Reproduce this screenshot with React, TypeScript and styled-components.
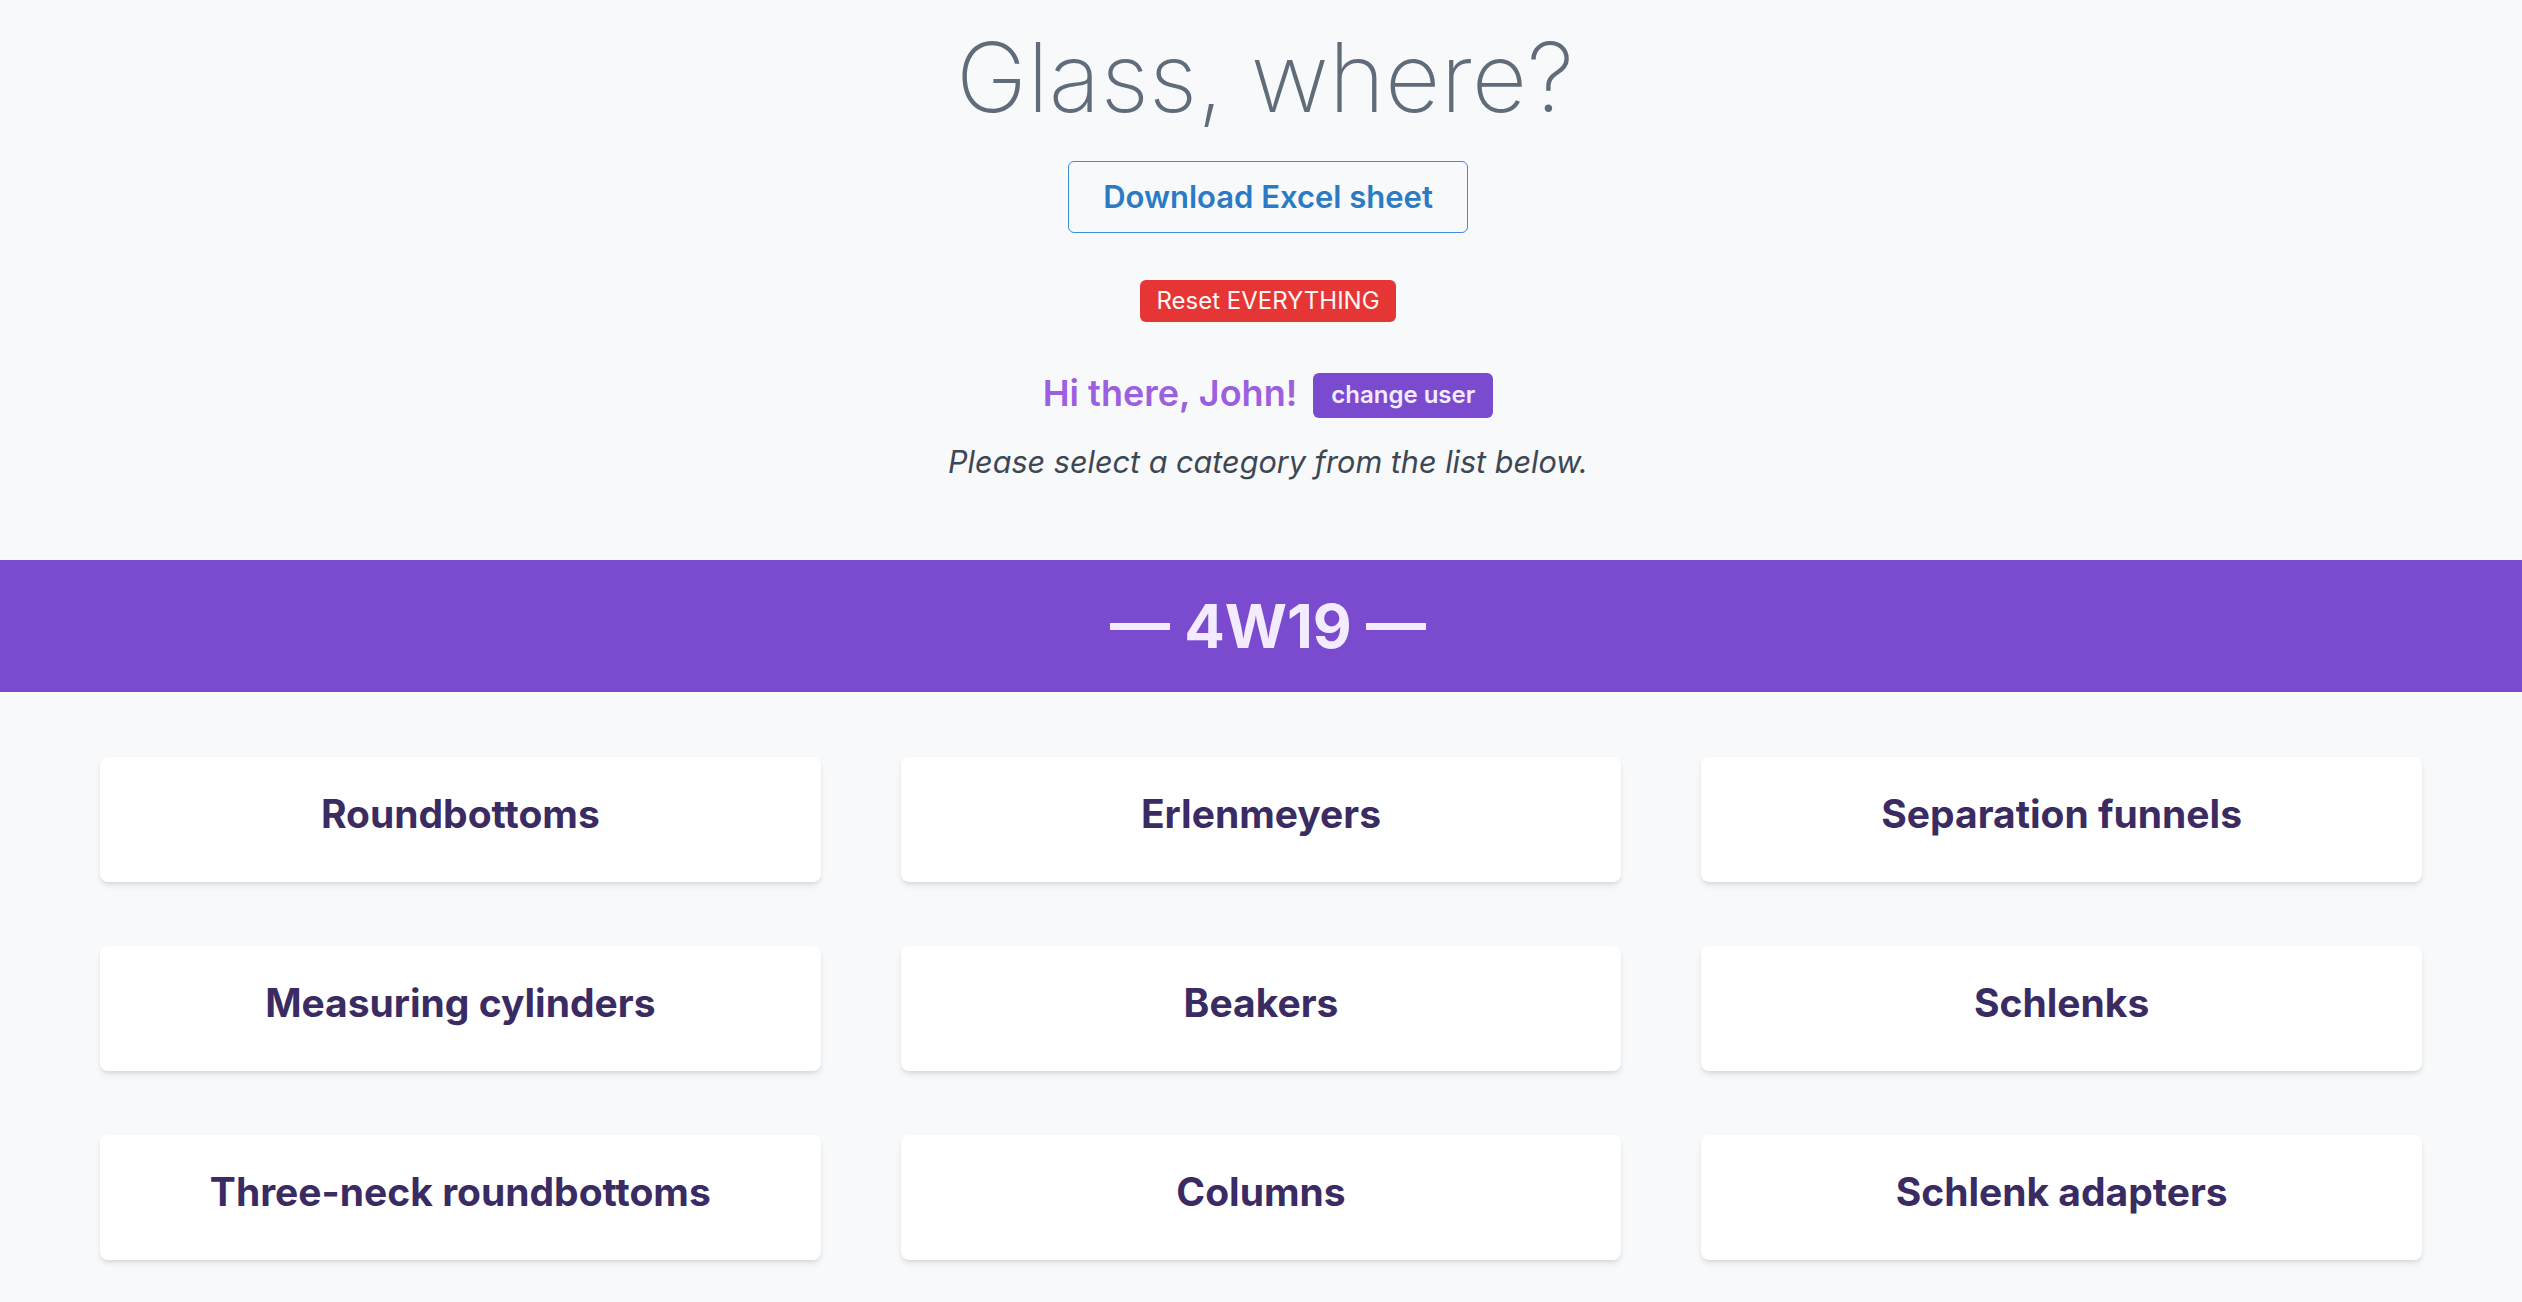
import * as React from "react";
import styled, { createGlobalStyle } from "styled-components";

const GlobalStyle = createGlobalStyle`
    html, body {
        margin: 0;
        padding: 0;
        background-color: #f7f9fb;
        font-family: Inter, "Noto Sans", "Liberation Sans", sans-serif;
    }
`;

const Page = styled.div`
    min-height: 1302px;
    display: flex;
    flex-direction: column;
    padding-bottom: 80px;
`;

const Header = styled.header`
    display: flex;
    flex-direction: column;
    align-items: center;
    padding-top: 5px;
    padding-left: 14px;
`;

const Title = styled.h1`
    margin: 0 6px 0 0;
    font-size: 96px;
    line-height: 144px;
    font-weight: 200;
    color: #606c7a;
`;

const DownloadButton = styled.button`
    margin-top: 12px;
    font-family: inherit;
    font-size: 31px;
    line-height: 44px;
    font-weight: 600;
    color: #2b7bc4;
    background: transparent;
    border: 1.5px solid #3a8ee0;
    border-radius: 6px;
    padding: 13px 34px;
    cursor: pointer;
`;

const ResetButton = styled.button`
    margin-top: 47px;
    font-family: inherit;
    font-size: 24px;
    line-height: 36px;
    font-weight: 400;
    color: #fff5f5;
    background-color: #e53535;
    border: none;
    border-radius: 6px;
    padding: 3px 16px;
    cursor: pointer;
`;

const UserRow = styled.div`
    margin-top: 48px;
    display: flex;
    align-items: center;
    gap: 16px;
    height: 45px;
`;

const Greeting = styled.span`
    font-size: 36px;
    font-weight: 600;
    color: #9b5fe0;
`;

const ChangeUserButton = styled.button`
    margin-top: 6px;
    font-family: inherit;
    font-size: 24px;
    line-height: 36px;
    font-weight: 600;
    color: #f3ebff;
    background-color: #7a4bcf;
    border: none;
    border-radius: 6px;
    padding: 4px 18px 5px;
    cursor: pointer;
`;

const Hint = styled.p`
    margin: 24px 0 0;
    font-size: 30.6px;
    line-height: 45px;
    font-style: italic;
    color: #3d4754;
`;

const Banner = styled.div`
    margin-top: 76px;
    background-color: #7a4bcf;
    color: #f3ebff;
    font-size: 60px;
    font-weight: 700;
    line-height: 96px;
    padding: 18px 0 18px 14px;
    text-align: center;
`;

const CategoryGrid = styled.div`
    margin-top: 65px;
    padding: 0 100px;
    display: grid;
    grid-template-columns: repeat(3, 1fr);
    column-gap: 80px;
    row-gap: 64px;
`;

const CategoryCard = styled.a`
    display: flex;
    align-items: center;
    justify-content: center;
    box-sizing: border-box;
    height: 125px;
    padding-bottom: 12px;
    background-color: #ffffff;
    border-radius: 8px;
    box-shadow: 0 4px 6px -1px rgba(0, 0, 0, 0.1), 0 2px 4px -1px rgba(0, 0, 0, 0.06);
    font-size: 39px;
    font-weight: 700;
    color: #3a2b62;
    text-decoration: none;
    cursor: pointer;
`;

const categories = [
    "Roundbottoms",
    "Erlenmeyers",
    "Separation funnels",
    "Measuring cylinders",
    "Beakers",
    "Schlenks",
    "Three-neck roundbottoms",
    "Columns",
    "Schlenk adapters",
];

export default function App() {
    return (
        <Page>
            <GlobalStyle />
            <Header>
                <Title>Glass, where?</Title>
                <DownloadButton>Download Excel sheet</DownloadButton>
                <ResetButton>Reset EVERYTHING</ResetButton>
                <UserRow>
                    <Greeting>Hi there, John!</Greeting>
                    <ChangeUserButton>change user</ChangeUserButton>
                </UserRow>
                <Hint>Please select a category from the list below.</Hint>
            </Header>
            <Banner>— 4W19 —</Banner>
            <CategoryGrid>
                {categories.map(name => (
                    <CategoryCard key={name}>{name}</CategoryCard>
                ))}
            </CategoryGrid>
        </Page>
    );
}
